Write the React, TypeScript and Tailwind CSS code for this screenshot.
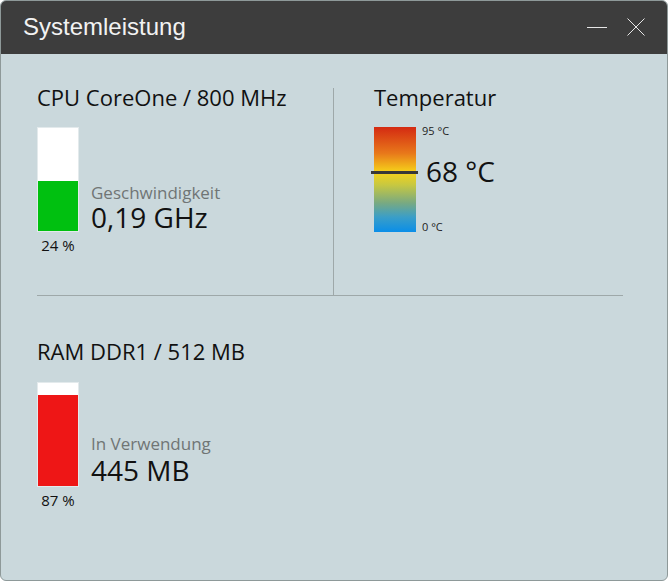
import React from 'react';

const body = { fontFamily: '"Open Sans", "Noto Sans", sans-serif' };

// fill is given in px: the bar in the picture is not drawn to the percentage
const UsageBar = ({ percent, fillPx, fill }: { percent: number; fillPx: number; fill: string }) => (
  <div className="flex flex-col items-center w-[42px]">
    <div className="w-[42px] h-[105px] border border-[#e3eaec] bg-white flex flex-col justify-end">
      <div className={fill} style={{ height: fillPx }} />
    </div>
    <div className="mt-[3px] text-[15px] leading-[20px] text-[#111]">{percent} %</div>
  </div>
);

const App = () => {
  return (
    <div className="w-[668px] h-[581px] bg-white">
      <div className="w-[668px] h-[581px] rounded-[6px] border border-[#8e9999] bg-[#cad8dc] overflow-hidden flex flex-col" style={body}>
        {/* title bar */}
        <div className="h-[53px] shrink-0 bg-[#3d3d3d] flex items-center pb-[2px] pl-[22px] pr-[22px]">
          <div className="text-[24px] leading-none text-[#f2f2f2]" style={{ fontFamily: '"Liberation Sans", Arial, sans-serif' }}>
            Systemleistung
          </div>
          <div className="ml-auto flex items-center gap-[20px]">
            <svg width="20" height="20" viewBox="0 0 20 20">
              <line x1="0" y1="10.5" x2="20" y2="10.5" stroke="#e6e6e6" strokeWidth="1" />
            </svg>
            <svg width="18" height="18" viewBox="0 0 18 18">
              <line x1="0.5" y1="0.5" x2="17.5" y2="17.5" stroke="#e6e6e6" strokeWidth="1" />
              <line x1="17.5" y1="0.5" x2="0.5" y2="17.5" stroke="#e6e6e6" strokeWidth="1" />
            </svg>
          </div>
        </div>

        {/* top section */}
        <div className="flex h-[241px] shrink-0">
          <div className="w-[296px] ml-[36px] pt-[30px]">
            <div className="text-[22px] leading-[26px] text-[#111]">CPU CoreOne / 800 MHz</div>
            <div className="mt-[17px] flex items-start">
              <UsageBar percent={24} fillPx={50} fill="bg-[#00c010]" />
              <div className="ml-[12px] mt-[56px]">
                <div className="text-[17px] leading-[20px] text-[#707575]">Geschwindigkeit</div>
                <div className="text-[28px] leading-[28px] text-[#111]">0,19 GHz</div>
              </div>
            </div>
          </div>
          <div className="w-px mt-[34px] bg-[#9ea8a9]" />
          <div className="pl-[40px] pt-[30px]">
            <div className="text-[22px] leading-[26px] text-[#111]">Temperatur</div>
            <div className="mt-[17px] flex items-start">
              <div className="relative w-[42px] h-[105px] bg-[linear-gradient(to_bottom,#d42a12_0%,#e8781a_25%,#f6d21a_43%,#c8c840_55%,#7aaa80_72%,#3a9ec8_86%,#0a8ee8_100%)]">
                <div className="absolute left-[-3px] right-[-2px] top-[44px] h-[3px] bg-[#383838]" />
              </div>
              <div className="flex flex-col items-start -mt-[2px]">
                <div className="ml-[6px] text-[11px] leading-[12px] text-[#222]">95 °C</div>
                <div className="ml-[10px] mt-[20px] text-[28px] leading-[28px] text-[#111]">68 °C</div>
                <div className="ml-[6px] mt-[36px] text-[11px] leading-[12px] text-[#222]">0 °C</div>
              </div>
            </div>
          </div>
        </div>

        <div className="ml-[36px] w-[586px] h-px bg-[#9ea8a9]" />

        {/* RAM */}
        <div className="ml-[36px] pt-[42px]">
          <div className="text-[22px] leading-[26px] text-[#111]">RAM DDR1 / 512 MB</div>
          <div className="mt-[18px] flex items-start">
            <UsageBar percent={87} fillPx={91} fill="bg-[#ee1616]" />
            <div className="ml-[12px] mt-[52px]">
              <div className="text-[17px] leading-[20px] text-[#707575]">In Verwendung</div>
              <div className="mt-[2px] text-[28px] leading-[28px] text-[#111]">445 MB</div>
            </div>
          </div>
        </div>
      </div>
    </div>
  );
};

export default App;
